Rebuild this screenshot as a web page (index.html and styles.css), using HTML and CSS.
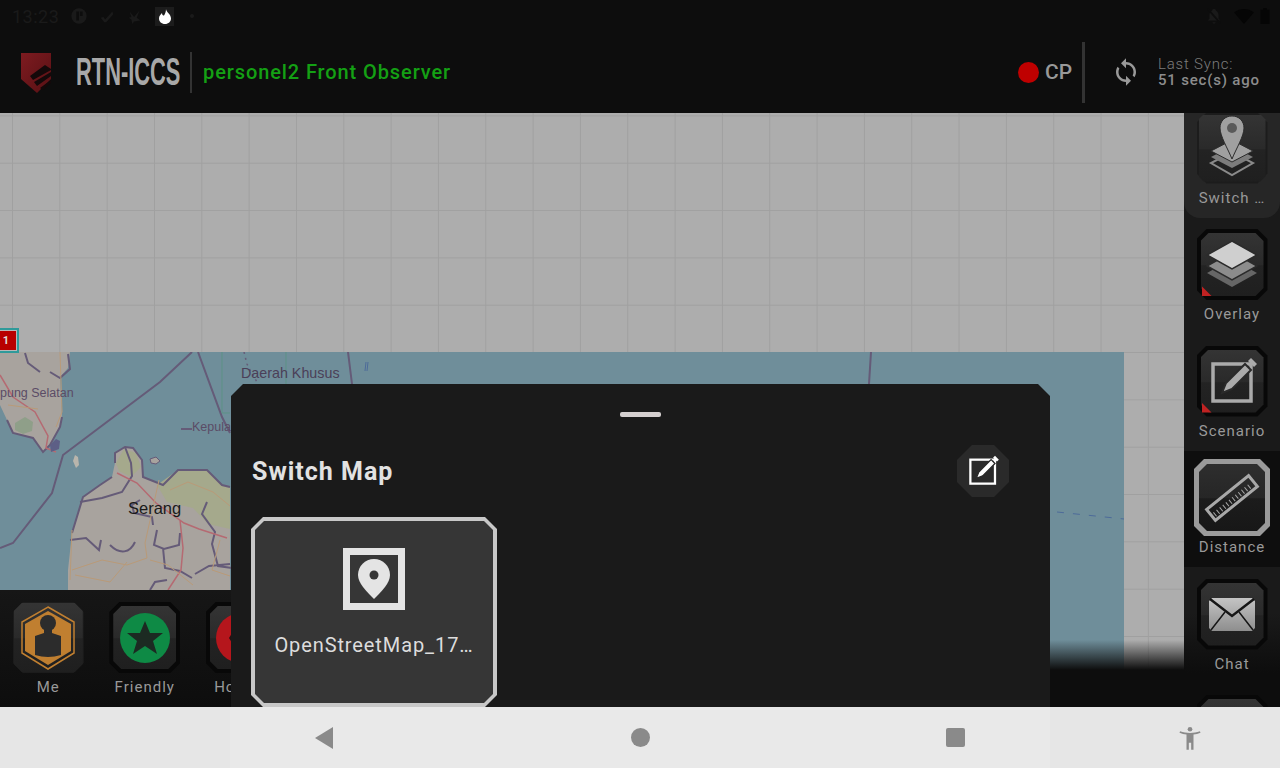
FILE: index.html
```html
<!DOCTYPE html>
<html lang="en">
<head>
  <meta charset="UTF-8" />
  <meta name="viewport" content="width=device-width, initial-scale=1.0" />
  <title>RTN-ICCS Switch Map</title>
  <link rel="stylesheet" href="styles.css">
</head>

<body>
  <svg class="defs" width="0" height="0">
    <symbol id="icon-edit" viewBox="0 0 71 71">
      <rect x="16" y="18" width="38" height="37" fill="none" stroke="currentColor" stroke-width="3.500" />
      <path d="M25 47l4-10L48 18l6 6-19 19z" fill="currentColor" stroke="#2a2a2a" stroke-width="2" />
      <path d="M51 15l3-3 6 6-3 3z" fill="currentColor" />
    </symbol>
    <symbol id="icon-man" viewBox="0 0 24 24">
      <circle cx="12" cy="4.500" r="2" fill="currentColor" />
      <path d="M3 7.500l.5-1.200c2.800 1 5.500 1.400 8.500 1.400s5.700-.4 8.500-1.400l.5 1.200c-2 .8-4 1.300-6 1.500V22h-2v-6h-2v6H9V9c-2-.2-4-.7-6-1.500z" fill="currentColor" />
    </symbol>
  </svg>

  <div class="top">
    <div class="status-bar">
      <span class="clock">13:23</span>
      <svg class="status-icon" viewBox="0 0 20 20"><circle cx="10" cy="10" r="8.500" fill="#1a1a1a" /><path d="M7 5h3v10H7zM11 5h3v5h-3z" fill="#0d0d0d" /></svg>
      <svg class="status-icon" viewBox="0 0 20 20"><path d="M3 12l3-1 2 3 8-9 1 3-8 9H7z" fill="#1a1a1a" /></svg>
      <svg class="status-icon" viewBox="0 0 20 20"><path d="M4 5l5 6 6-7-3 8 4 3-7 1-2 3-1-5-3-2 3-1z" fill="#1a1a1a" /></svg>
      <span class="flame-box">
        <svg width="12" height="15" viewBox="0 0 12 15"><path d="M7 0c0 3 5 5 5 9.500 0 3-2.500 5.500-6 5.500s-6-2.500-6-5.500C0 7 1.500 5.500 3 4c0 2 1 2.500 2 2.500C6 5 7 3 7 0z" fill="#fff" /></svg>
      </span>
      <span class="status-dot"></span>
      <span class="status-right">
        <svg class="status-icon bell" viewBox="0 0 20 20"><path d="M10 2a2 2 0 0 0-2 2c-2 1-3 3-3 5v4l-2 2h14l-2-2V9c0-2-1-4-3-5a2 2 0 0 0-2-2zM8 17h4l-2 2z" fill="#1a1a1a" /><path d="M3 2l14 16" stroke="#0d0d0d" stroke-width="2" /></svg>
        <svg class="status-icon wifi" viewBox="0 0 22 20"><path d="M0 6c6-5 16-5 22 0L11 19z" fill="#050505" /></svg>
        <svg class="status-icon battery" viewBox="0 0 20 20"><path d="M5 3h3V1h4v2h3v16H5z" fill="#050505" /></svg>
      </span>
    </div>

    <header class="app-header">
      <svg class="logo" width="31" height="41" viewBox="0 0 31 41">
        <defs>
          <linearGradient id="shield" x1="0" y1="0" x2="1" y2="1">
            <stop offset="0" stop-color="#7e1b20" />
            <stop offset="1" stop-color="#571014" />
          </linearGradient>
        </defs>
        <path d="M1 1h30v26L17 41 1 27z" fill="url(#shield)" />
        <path d="M10 24l15-11 6 4v1L13 28zM14 30l17-10v4L17 34zM20 36l11-8v3l-8 7z" fill="#14090a" />
      </svg>
      <span class="brand">RTN-ICCS</span>
      <span class="brand-sep"></span>
      <span class="user">personel2 Front Observer</span>
      <span class="cp-dot"></span>
      <span class="cp-label">CP</span>
      <span class="header-sep"></span>
      <svg class="sync" width="30" height="30" viewBox="0 0 24 24"><path d="M12 4V1L8 5l4 4V6c3.310 0 6 2.690 6 6 0 1.010-.25 1.970-.7 2.800l1.460 1.460C19.540 15.030 20 13.570 20 12c0-4.420-3.580-8-8-8zm0 14c-3.310 0-6-2.690-6-6 0-1.010.25-1.970.7-2.800L5.240 7.740C4.460 8.970 4 10.430 4 12c0 4.420 3.580 8 8 8v3l4-4-4-4v3z" fill="#999" /></svg>
      <div class="sync-text">
        <div class="sync-title">Last Sync:</div>
        <div class="sync-value">51 sec(s) ago</div>
      </div>
    </header>
  </div>

  <main class="main">
    <section class="map-area">
      <!-- map tile, drawn in page coordinates -->
      <svg class="map-tile" width="1124" height="355" viewBox="0 352 1124 355">
        <rect x="0" y="352" width="1124" height="355" fill="#6f8e9a" />
        <path d="M0 352h70l-2 16-8 9 2 40-2 10-10 18-7 7-10-14-20-5-6-13-7-15z" fill="#a8a39e" />
        <path d="M15 423l10-6 8 5-1 9-9 3-8-4z" fill="#8f9f89" />
        <path d="M115 463v-10l10-6 8 1 9 12 1 17 20 8 15-15h29l15 15 8 2v103H68v-20l4-37 11-36 17-12 12-8z" fill="#a8a39e" />
        <path d="M157 485l21-15h29l15 15 8 2v42l-22-5-15-16-26-6zM116 463l8-14 12 4 5 14-10 10-12-6z" fill="#a5a98c" />
        <g fill="none" stroke="#655b78" stroke-width="2">
          <path d="M192 352l-32 30-97 73-11 38-39 50-13 5M198 352l24 65 8 16M348 352l4 32M871 352l-2 32" />
          <path d="M25 353l3 10 12 9M50 372l10 6 10-9-2-15M62 417l-2 10-10 18-7 7-10-14-20-5-6-13M115 463v-10l10-6 8 1 9 12 1 17 20 8 15-15h29l15 15 8 2M72 533l11-36 17-12 12-8" />
          <path d="M125 447l6 16 1 13-10 16-20 6-22 4M140 500l-8 5 2 8 18 4 1 8M70 540l16-2 13 12 2-10M110 545c10 10 20 8 25-3M157 530l-3 15 10 4 15-4 1-12M163 548l2 20 15 3 12 7M207 502l-5 12 13 18-3 12 6 22 14 2M150 590l5-8 12-2M195 574l14-8 21-2" />
        </g>
        <g fill="none" stroke="#b56a72" stroke-width="1.500">
          <path d="M0 375l13 22 22 15 13 24-2 12 10 4M117 473l20 10 19 20 28 20 15 6 28 9M180 520l3 28-2 22-13 20" />
        </g>
        <g fill="none" stroke="#b99a78" stroke-width="1">
          <path d="M60 352l2 60-6 15M8 405l30 4M72 530l-2 50M72 570l30-10 25 5 20-7-2-15 4-18 10-45M75 575l35 7 17-20M170 490l18-8 25 10 17 14M150 560l18 5 25 20M220 540l-8 30 18 6" />
        </g>
        <path d="M222 352v61h8M286 352v32" fill="none" stroke="#5d9185" stroke-width="1" />
        <path d="M244 352l3 12 5 10 5 8" fill="none" stroke="#655b78" stroke-width="1.500" stroke-dasharray="2 4" />
        <path d="M1057 512l67 7" fill="none" stroke="#4d6b99" stroke-width="1" stroke-dasharray="7 9" />
        <path d="M75 455l-2 6 3 7 3-3-1-8z" fill="#b9b5ac" />
        <path d="M150 459l6-2 4 4-4 3-5-1z" fill="#a8a39e" stroke="#655b78" />
        <path d="M181 429h11" stroke="#655b78" stroke-width="2" />
        <path d="M366 362l-1 9M368 362l-1 9" stroke="#4d6b99" stroke-width="1" />
        <path d="M50 445l6-6 4 2-1 8-8 3z" fill="#5d5f86" />
        <text class="map-label" x="0" y="397">pung Selatan</text>
        <text class="map-label" x="192" y="431">Kepula</text>
        <text class="map-label large" x="241" y="378">Daerah Khusus</text>
        <text class="map-city" x="128" y="514">Serang</text>
      </svg>

      <div class="marker">1</div>
      <div class="map-fade"></div>

      <div class="unit-bar">
        <div class="unit">
          <div class="unit-btn plain">
            <div class="unit-face">
              <svg width="68" height="70" viewBox="0 0 68 70">
                <path d="M34 4l26 15v31L34 66 8 50V19z" fill="none" stroke="#c07f30" stroke-width="1.500" />
                <path d="M34 8l23 13v27L34 62 11 48V21z" fill="#c07f30" />
                <circle cx="34" cy="20" r="8" fill="#2c2c2c" />
                <path d="M30 26h8v4l9 3v19q-13 4-26 0V33l9-3z" fill="#2c2c2c" />
              </svg>
            </div>
          </div>
          <span class="tool-label">Me</span>
        </div>
        <div class="unit">
          <div class="unit-btn">
            <div class="unit-face">
              <svg width="64" height="64" viewBox="0 0 64 64">
                <circle cx="32" cy="32" r="25" fill="#0e8a45" />
                <path d="M32 15l5 12h13l-10 8 4 13-12-8-12 8 4-13-10-8h13z" fill="#1c2a22" />
              </svg>
            </div>
          </div>
          <span class="tool-label">Friendly</span>
        </div>
        <div class="unit">
          <div class="unit-btn">
            <div class="unit-face">
              <svg width="64" height="64" viewBox="0 0 64 64">
                <circle cx="32" cy="32" r="25" fill="#b5161c" />
                <path d="M32 13l14 19-14 19-12-19z" fill="#2a1010" />
              </svg>
            </div>
          </div>
          <span class="tool-label">Hostile</span>
        </div>
      </div>

      <div class="sheet">
        <div class="handle"></div>
        <div class="sheet-head">
          <h1>Switch Map</h1>
          <button class="edit-btn" type="button">
            <svg width="46" height="46"><use href="#icon-edit" /></svg>
          </button>
        </div>
        <div class="map-card">
          <div class="map-card-face">
            <svg width="62" height="62" viewBox="0 0 62 62">
              <rect x="3.500" y="3.500" width="55" height="55" fill="none" stroke="#e4e4e4" stroke-width="7" />
              <path d="M31 11c9 0 16 7 16 16 0 8-8 16-16 24-8-8-16-16-16-24 0-9 7-16 16-16z" fill="#e4e4e4" />
              <circle cx="31" cy="27" r="4.500" fill="#363636" />
            </svg>
            <div class="map-name">OpenStreetMap_17…</div>
          </div>
        </div>
      </div>
    </section>

    <aside class="rail">
      <div class="rail-item current">
        <div class="tool-btn plain">
          <div class="tool-face">
            <svg width="71" height="71" viewBox="0 0 71 71">
              <path d="M35 39l21 11-21 12-21-12z" fill="none" stroke="#8a8a8a" stroke-width="2" />
              <path d="M35 33l21 11-21 11-21-11z" fill="#7c7c7c" />
              <path d="M35 27l21 11-21 11-21-11z" fill="#a0a0a0" stroke="#2b2b2b" />
              <path d="M35 3c7 0 12 5 12 12 0 8-8 21-12 31-4-10-12-23-12-31 0-7 5-12 12-12z" fill="#a0a0a0" stroke="#2b2b2b" />
              <circle cx="35" cy="15" r="5" fill="#5a5a5a" />
            </svg>
          </div>
        </div>
        <span class="tool-label">Switch …</span>
      </div>
      <div class="rail-item">
        <div class="tool-btn">
          <div class="tool-face">
            <svg width="63" height="63" viewBox="0 0 63 63">
              <path d="M31 26l25 14-25 14L6 40z" fill="#666" />
              <path d="M31 19l25 14-25 14L6 33z" fill="#8c8c8c" stroke="#2b2b2b" stroke-width="1.500" />
              <path d="M31 8l25 14-25 14L6 22z" fill="#cfcfcf" stroke="#2b2b2b" stroke-width="1.500" />
            </svg>
          </div>
          <span class="corner-flag"></span>
        </div>
        <span class="tool-label">Overlay</span>
      </div>
      <div class="rail-item">
        <div class="tool-btn">
          <div class="tool-face scenario">
            <svg width="71" height="71"><use href="#icon-edit" /></svg>
          </div>
          <span class="corner-flag"></span>
        </div>
        <span class="tool-label">Scenario</span>
      </div>
      <div class="rail-item selected">
        <div class="tool-btn active">
          <div class="tool-face">
            <svg width="66" height="66" viewBox="0 0 66 66">
              <g transform="rotate(-39 33 33)" fill="none" stroke="#a8a8a8">
                <rect x="6" y="26" width="54" height="14" stroke-width="3" />
                <path d="M9 35h48" stroke-width="5" stroke-dasharray="1 3" />
              </g>
            </svg>
          </div>
        </div>
        <span class="tool-label">Distance</span>
      </div>
      <div class="rail-item">
        <div class="tool-btn">
          <div class="tool-face">
            <svg width="46" height="34" viewBox="0 0 46 34">
              <defs>
                <linearGradient id="mail" x1="0" y1="0" x2="0" y2="1">
                  <stop offset="0" stop-color="#c4c4c4" />
                  <stop offset="1" stop-color="#8e8e8e" />
                </linearGradient>
              </defs>
              <path d="M3 1h40l3 3v27l-3 3H3l-3-3V4z" fill="url(#mail)" />
              <path d="M1 2l22 17L45 2" fill="none" stroke="#161616" stroke-width="2.500" />
              <path d="M2 33l14-18M44 33L30 15" stroke="#161616" stroke-width="1.500" />
            </svg>
          </div>
        </div>
        <span class="tool-label">Chat</span>
      </div>
      <div class="rail-item">
        <div class="tool-btn"><div class="tool-face"></div></div>
      </div>
    </aside>
  </main>

  <nav class="nav-bar">
    <svg class="nav-back" width="18" height="22" viewBox="0 0 18 22"><path d="M18 0v22L0 11z" fill="#8a8a8a" /></svg>
    <span class="nav-home"></span>
    <span class="nav-recent"></span>
    <svg class="nav-access" width="28" height="28"><use href="#icon-man" /></svg>
  </nav>
</body>
</html>
```

FILE: styles.css
```css
* {
  box-sizing: border-box;
}

body {
  width: 1280px;
  height: 768px;
  margin: 0;
  overflow: hidden;
  font-family: 'Roboto', 'Liberation Sans', sans-serif;
  background-color: #0d0d0d;
}

.defs {
  display: block;
  height: 0;
}

/* status bar and header */
.top {
  height: 113px;
  background-color: #0d0d0d;
}

.status-bar {
  display: flex;
  align-items: center;
  height: 32px;
  padding-left: 12px;
}

.clock {
  width: 58px;
  font-size: 18px;
  letter-spacing: 0.5px;
  color: #1a1a1a;
}

.status-icon {
  width: 18px;
  height: 18px;
  margin-right: 10px;
}

.flame-box {
  display: flex;
  align-items: center;
  justify-content: center;
  width: 19px;
  height: 19px;
  margin-left: 1px;
  background-color: #1c1c1c;
}

.status-dot {
  width: 4px;
  height: 4px;
  margin-left: 16px;
  border-radius: 50%;
  background-color: #1a1a1a;
}

.status-right {
  display: flex;
  align-items: center;
  margin-left: auto;
}

.status-right .bell {
  margin-right: 10px;
}

.status-right .wifi {
  width: 22px;
  margin-right: 1px;
}

.status-right .battery {
  margin-right: 6px;
}

.app-header {
  display: flex;
  align-items: center;
  height: 80px;
  padding-left: 20px;
}

.logo {
  flex: none;
}

.brand {
  display: inline-block;
  width: 104px;
  margin-left: 25px;
  font-family: 'Liberation Sans', sans-serif;
  font-size: 38px;
  font-weight: 700;
  line-height: 40px;
  white-space: nowrap;
  transform: scaleX(0.575);
  transform-origin: left center;
  color: #a8a8a8;
}

.brand-sep {
  width: 2px;
  height: 41px;
  margin-left: 10px;
  background-color: #333;
}

.user {
  margin-left: 11px;
  font-size: 20px;
  font-weight: 500;
  letter-spacing: 0.9px;
  color: #14a014;
}

.cp-dot {
  width: 21px;
  height: 21px;
  margin-left: auto;
  border-radius: 50%;
  background-color: #bf0000;
}

.cp-label {
  width: 37px;
  margin-left: 6px;
  font-size: 21px;
  font-weight: 500;
  color: #999;
}

.header-sep {
  width: 3px;
  height: 61px;
  background-color: #333;
}

.sync {
  margin-left: 26px;
}

.sync-text {
  width: 122px;
  margin-left: 17px;
  line-height: 16px;
  font-size: 15px;
  letter-spacing: 0.8px;
}

.sync-title {
  font-weight: 300;
  color: #7c7c7c;
}

.sync-value {
  font-weight: 500;
  color: #8c8c8c;
}

/* main area */
.main {
  display: flex;
  height: 594px;
}

.map-area {
  position: relative;
  width: 1184px;
  overflow: hidden;
  background-color: #adadad;
  background-image:
    linear-gradient(to right, #a0a0a0 1px, transparent 1px),
    linear-gradient(to bottom, #a0a0a0 1px, transparent 1px);
  background-size: 47.33px 47.33px;
  background-position: 12px 2.4px;
}

.map-tile {
  position: absolute;
  top: 239px;
  left: 0;
}

.map-label {
  font-family: 'Liberation Sans', sans-serif;
  font-size: 12.5px;
  fill: #5b4c66;
}

.map-label.large {
  font-size: 14.3px;
  fill: #4b3f58;
}

.map-city {
  font-family: 'Liberation Sans', sans-serif;
  font-size: 16.5px;
  fill: #1a1a1a;
}

.marker {
  position: absolute;
  top: 217px;
  left: -5px;
  width: 22px;
  height: 21px;
  border: 1px solid #b8b8b8;
  outline: 2px solid #2f9a9a;
  background-color: #b80000;
  line-height: 19px;
  text-align: center;
  font-size: 11px;
  font-weight: 700;
  color: #ddd;
}

.map-fade {
  position: absolute;
  left: 0;
  right: 0;
  bottom: 0;
  height: 67px;
  background: linear-gradient(to bottom, transparent, #0d0d0d 30px);
}

/* bottom left unit buttons */
.unit-bar {
  position: absolute;
  left: 0;
  bottom: 0;
  display: flex;
  width: 300px;
  height: 117px;
  background: linear-gradient(to bottom, #161616, #0d0d0d);
}

.unit {
  display: flex;
  flex-direction: column;
  align-items: center;
  flex: none;
  width: 96.5px;
  padding-top: 12px;
}

.unit-btn,
.tool-btn {
  position: relative;
  flex: none;
  width: 71px;
  height: 71px;
  padding: 4px;
}

.unit-btn::before,
.tool-btn::before {
  content: "";
  position: absolute;
  inset: 0;
  background-color: #080808;
  clip-path: polygon(10px 0, calc(100% - 10px) 0, 100% 10px, 100% calc(100% - 10px), calc(100% - 10px) 100%, 10px 100%, 0 calc(100% - 10px), 0 10px);
}

.unit-face,
.tool-face {
  position: relative;
  display: flex;
  align-items: center;
  justify-content: center;
  width: 100%;
  height: 100%;
  overflow: hidden;
  background: linear-gradient(to bottom, #343434, #2a2a2a 50%, #232323 52%, #1f1f1f);
  clip-path: polygon(8px 0, calc(100% - 8px) 0, 100% 8px, 100% calc(100% - 8px), calc(100% - 8px) 100%, 8px 100%, 0 calc(100% - 8px), 0 8px);
}

.unit-btn svg,
.tool-btn svg {
  flex: none;
}

.unit-btn.plain::before,
.tool-btn.plain::before {
  background-color: #1c1c1c;
}

.unit-btn.plain {
  padding: 1px;
}

.tool-btn.plain {
  padding: 2px;
}

.tool-btn.plain .tool-face {
  clip-path: polygon(5px 0, calc(100% - 5px) 0, 100% 5px, 100% calc(100% - 5px), calc(100% - 5px) 100%, 5px 100%, 0 calc(100% - 5px), 0 5px);
}

.tool-label {
  margin-top: 4px;
  line-height: 20px;
  font-size: 15px;
  letter-spacing: 1px;
  white-space: nowrap;
  color: #999;
}

/* right rail */
.rail {
  display: flex;
  flex-direction: column;
  flex: none;
  width: 96px;
  overflow: hidden;
  background: linear-gradient(to bottom, #1a1a1a, #1a1a1a 500px, #0d0d0d 560px);
}

.rail-item {
  display: flex;
  flex-direction: column;
  align-items: center;
  flex: none;
  height: 116.5px;
  padding-top: 11.5px;
}

.rail-item.current {
  margin-top: -12px;
  border-radius: 0 0 16px 16px;
  background-color: #262626;
}

.rail-item.selected {
  background-color: #0e0e0e;
}

.tool-btn.active {
  padding: 5px;
  margin: -3px 0;
  width: 76px;
  height: 77px;
}

.tool-btn.active::before {
  background-color: #9a9a9a;
}

.tool-btn.active .tool-face {
  background: linear-gradient(to bottom, #2e2e2e, #262626 50%, #1c1c1c 52%, #171717);
}

.scenario {
  color: #ababab;
}

.corner-flag {
  position: absolute;
  left: 5px;
  bottom: 4px;
  width: 10px;
  height: 10px;
  background-color: #c02222;
  clip-path: polygon(0 0, 100% 100%, 0 100%);
}

/* switch map sheet */
.sheet {
  position: absolute;
  top: 271px;
  left: 231px;
  width: 819px;
  height: 323px;
  overflow: hidden;
  padding-left: 20px;
  padding-right: 41px;
  background-color: #1a1a1a;
  clip-path: polygon(12px 0, calc(100% - 12px) 0, 100% 12px, 100% 100%, 0 100%, 0 12px);
}

.handle {
  width: 41px;
  height: 5px;
  margin: 28px auto 0 369px;
  border-radius: 2px;
  background-color: #d4cfcf;
}

.sheet-head {
  display: flex;
  align-items: center;
  justify-content: space-between;
  margin-top: 28px;
  padding-left: 1px;
}

h1 {
  margin: 0;
  font-size: 25px;
  font-weight: 700;
  letter-spacing: 1px;
  color: #e2e2e2;
}

.edit-btn {
  display: flex;
  align-items: center;
  justify-content: center;
  width: 52px;
  height: 52px;
  padding: 0;
  border: none;
  color: #fff;
  background-color: #2a2a2a;
  clip-path: polygon(15px 0, calc(100% - 15px) 0, 100% 15px, 100% calc(100% - 15px), calc(100% - 15px) 100%, 15px 100%, 0 calc(100% - 15px), 0 15px);
}

.map-card {
  width: 246px;
  height: 190px;
  margin-top: 20px;
  padding: 4px;
  background-color: #c8c8c8;
  clip-path: polygon(12px 0, calc(100% - 12px) 0, 100% 12px, 100% calc(100% - 12px), calc(100% - 12px) 100%, 12px 100%, 0 calc(100% - 12px), 0 12px);
}

.map-card-face {
  display: flex;
  flex-direction: column;
  align-items: center;
  height: 100%;
  padding-top: 27px;
  background-color: #363636;
  clip-path: polygon(9px 0, calc(100% - 9px) 0, 100% 9px, 100% calc(100% - 9px), calc(100% - 9px) 100%, 9px 100%, 0 calc(100% - 9px), 0 9px);
}

.map-name {
  margin-top: 23px;
  white-space: nowrap;
  line-height: 24px;
  font-size: 20px;
  letter-spacing: 0.9px;
  color: #ddd;
}

/* android nav bar */
.nav-bar {
  display: flex;
  align-items: center;
  height: 61px;
  padding-left: 315px;
  background: linear-gradient(to right, #e6e6e6 230px, #e9e9e9 230px, #e9e9e9 1050px, #e6e6e6 1050px);
}

.nav-home {
  width: 19px;
  height: 19px;
  margin-left: 298px;
  border-radius: 50%;
  background-color: #8a8a8a;
}

.nav-recent {
  width: 19px;
  height: 19px;
  margin-left: 296px;
  border-radius: 2px;
  background-color: #8a8a8a;
}

.nav-access {
  margin-left: 211px;
  color: #8a8a8a;
}
```
